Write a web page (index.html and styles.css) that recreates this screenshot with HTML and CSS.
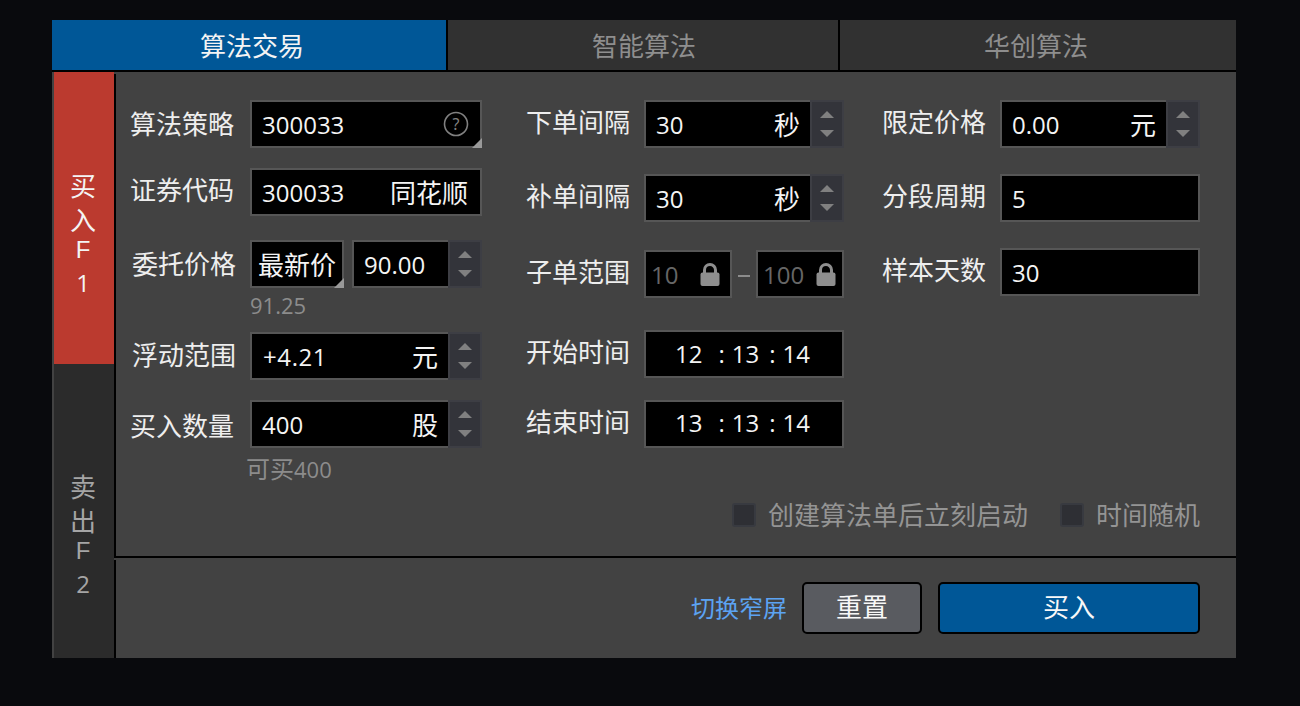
FILE: index.html
```html
<!DOCTYPE html>
<html lang="zh-CN">
<head>
    <meta charset="UTF-8">
    <meta name="viewport" content="width=device-width, initial-scale=1.0">
    <title>算法交易</title>
    <link rel="stylesheet" href="styles.css">
</head>
<body>
    <div class="panel">
        <div class="tabs">
            <div class="tab active">算法交易</div>
            <div class="tab middle">智能算法</div>
            <div class="tab last">华创算法</div>
        </div>
        <div class="content">
            <div class="side">
                <div class="side-btn buy">
                    <span class="ch">买</span><span class="ch">入</span><span class="key">F</span><span class="ch num">1</span>
                </div>
                <div class="side-btn sell">
                    <span class="ch">卖</span><span class="ch">出</span><span class="key">F</span><span class="ch num">2</span>
                </div>
            </div>
            <div class="main">
                <div class="form">
                    <div class="cols">
                        <div class="col col-1">
                            <div class="row">
                                <div class="label">算法策略</div>
                                <div class="field grow corner">
                                    <span class="num">300033</span>
                                    <svg class="help" width="26" height="26" viewBox="0 0 26 26">
                                        <circle cx="13" cy="13" r="11.5" fill="none" stroke="#808080" stroke-width="1.6"/>
                                        <text x="13" y="18.5" text-anchor="middle" font-size="16" fill="#808080">?</text>
                                    </svg>
                                </div>
                            </div>
                            <div class="row mt20">
                                <div class="label up">证券代码</div>
                                <div class="field grow">
                                    <span class="num">300033</span>
                                    <span class="unit name">同花顺</span>
                                </div>
                            </div>
                            <div class="row mt24">
                                <div class="label in2">委托价格</div>
                                <div class="field select corner">最新价</div>
                                <div class="field price stepped">
                                    <span class="num">90.00</span>
                                </div>
                                <div class="stepper"><i class="arrow-up"></i><i class="arrow-down"></i></div>
                            </div>
                            <div class="hint hint-price">91.25</div>
                            <div class="row">
                                <div class="label in2 up-small">浮动范围</div>
                                <div class="field grow stepped">
                                    <span class="num spaced">+4.21</span>
                                    <span class="unit">元</span>
                                </div>
                                <div class="stepper"><i class="arrow-up"></i><i class="arrow-down"></i></div>
                            </div>
                            <div class="row mt20">
                                <div class="label down">买入数量</div>
                                <div class="field grow stepped">
                                    <span class="num">400</span>
                                    <span class="unit">股</span>
                                </div>
                                <div class="stepper"><i class="arrow-up"></i><i class="arrow-down"></i></div>
                            </div>
                            <div class="hint hint-qty">可买<span class="hint-num">400</span></div>
                        </div>

                        <div class="col col-2">
                            <div class="row">
                                <div class="label up">下单间隔</div>
                                <div class="field grow stepped">
                                    <span class="num">30</span>
                                    <span class="unit">秒</span>
                                </div>
                                <div class="stepper"><i class="arrow-up"></i><i class="arrow-down"></i></div>
                            </div>
                            <div class="row mt26">
                                <div class="label up">补单间隔</div>
                                <div class="field grow stepped">
                                    <span class="num">30</span>
                                    <span class="unit">秒</span>
                                </div>
                                <div class="stepper"><i class="arrow-up"></i><i class="arrow-down"></i></div>
                            </div>
                            <div class="row mt28">
                                <div class="label up">子单范围</div>
                                <div class="field locked lock-min">
                                    <span class="num">10</span>
                                    <svg class="lock" width="20" height="23" viewBox="0 0 20 23">
                                        <path d="M4.5 11V7a5.5 5.5 0 0 1 11 0V11" fill="none" stroke="#8e8e8e" stroke-width="3"/>
                                        <rect x="0.5" y="9.5" width="19" height="13.5" rx="2" fill="#8e8e8e"/>
                                    </svg>
                                </div>
                                <span class="dash"></span>
                                <div class="field locked">
                                    <span class="num">100</span>
                                    <svg class="lock" width="20" height="23" viewBox="0 0 20 23">
                                        <path d="M4.5 11V7a5.5 5.5 0 0 1 11 0V11" fill="none" stroke="#8e8e8e" stroke-width="3"/>
                                        <rect x="0.5" y="9.5" width="19" height="13.5" rx="2" fill="#8e8e8e"/>
                                    </svg>
                                </div>
                            </div>
                            <div class="row mt32">
                                <div class="label up">开始时间</div>
                                <div class="field grow time">
                                    <span class="num">12</span><span class="sep">:</span><span class="num">13</span><span class="sep2">:</span><span class="num">14</span>
                                </div>
                            </div>
                            <div class="row mt22">
                                <div class="label up">结束时间</div>
                                <div class="field grow time time-end">
                                    <span class="num">13</span><span class="sep">:</span><span class="num">13</span><span class="sep2">:</span><span class="num">14</span>
                                </div>
                            </div>
                        </div>

                        <div class="col col-3">
                            <div class="row">
                                <div class="label up">限定价格</div>
                                <div class="field grow stepped">
                                    <span class="num">0.00</span>
                                    <span class="unit">元</span>
                                </div>
                                <div class="stepper"><i class="arrow-up"></i><i class="arrow-down"></i></div>
                            </div>
                            <div class="row mt26">
                                <div class="label up">分段周期</div>
                                <div class="field grow"><span class="num">5</span></div>
                            </div>
                            <div class="row mt26">
                                <div class="label up">样本天数</div>
                                <div class="field grow"><span class="num">30</span></div>
                            </div>
                        </div>
                    </div>

                    <div class="options">
                        <div class="check"><i class="box"></i>创建算法单后立刻启动</div>
                        <div class="check"><i class="box"></i>时间随机</div>
                    </div>
                </div>
                <div class="footer">
                    <div class="footer-inner">
                        <a class="switch">切换窄屏</a>
                        <button class="btn btn-reset">重置</button>
                        <button class="btn btn-buy">买入</button>
                    </div>
                </div>
            </div>
        </div>
    </div>
</body>
</html>
```

FILE: styles.css
```css
body {
    margin: 0;
    background-color: #090a0d;
    color: #eeeeee;
    font-family: "Noto Sans", "Noto Sans CJK SC", sans-serif;
    font-size: 26px;
    height: 706px;
    overflow: hidden;
}
.panel {
    width: 1184px;
    height: 638px;
    margin: 20px 0 0 52px;
    display: flex;
    flex-direction: column;
    background-color: #000;
}

/* tabs */
.tabs {
    display: flex;
    gap: 2px;
    height: 50px;
    margin-bottom: 2px;
}
.tab {
    display: flex;
    align-items: center;
    justify-content: center;
    box-sizing: border-box;
    background-color: #313131;
    color: #8e8e8e;
}
.tab.active {
    width: 394px;
    padding-left: 6px;
    background-color: #005797;
    color: #f4f4f4;
}
.tab.middle {
    width: 390px;
    padding-left: 2px;
}
.tab.last {
    flex: 1;
    padding-right: 4px;
}
.content {
    flex: 1;
    display: flex;
    min-height: 0;
}

/* buy / sell */
.side {
    width: 62px;
    display: flex;
    flex-direction: column;
    background-color: #424242;
    padding-left: 2px;
    box-sizing: border-box;
}
.side-btn {
    display: flex;
    flex-direction: column;
    align-items: center;
    box-sizing: border-box;
    padding-right: 2px;
}
.side-btn.buy {
    height: 292px;
    padding-top: 98px;
    background-color: #bb3a2f;
    color: #f4f4f4;
}
.side-btn.sell {
    flex: 1;
    padding-top: 107px;
    background-color: #2b2b2b;
    color: #a5a5a5;
}
.ch {
    height: 34px;
    line-height: 34px;
    font-family: "Liberation Sans", "Noto Sans CJK SC", sans-serif;
}
.ch.num {
    font-size: 24px;
    margin-top: 4px;
}
.key {
    height: 24px;
    line-height: 24px;
    font-size: 24px;
    font-family: "Liberation Sans", sans-serif;
}

/* form */
.main {
    flex: 1;
    display: flex;
    flex-direction: column;
    padding-top: 2px;
    background-color: #424242;
}
.form {
    flex: 1;
    display: flex;
    flex-direction: column;
    padding: 26px 36px 29px 14px;
    border-left: 2px solid #000;
    border-bottom: 2px solid #000;
}
.cols {
    display: flex;
}
.col-1 {
    width: 352px;
    margin-right: 44px;
}
.col-2 {
    width: 318px;
    margin-right: 38px;
}
.col-3 {
    width: 318px;
}
.row {
    display: flex;
    align-items: center;
    height: 48px;
}
.mt20 { margin-top: 20px; }
.mt22 { margin-top: 22px; }
.mt24 { margin-top: 24px; }
.mt26 { margin-top: 26px; }
.mt28 { margin-top: 28px; }
.mt32 { margin-top: 32px; }
.label {
    width: 120px;
    flex: none;
    line-height: 34px;
    white-space: nowrap;
    box-sizing: border-box;
}
.col-2 .label, .col-3 .label {
    width: 118px;
}
.label.up { padding-bottom: 4px; }
.label.up-small { padding-bottom: 2px; }
.label.down { padding-top: 4px; }
.label.in2 { padding-left: 2px; }

.field {
    position: relative;
    height: 48px;
    box-sizing: border-box;
    display: flex;
    align-items: center;
    justify-content: space-between;
    padding: 0 10px;
    background-color: #000;
    border: 2px solid #565656;
    color: #f4f4f4;
    white-space: nowrap;
}
.field.stepped {
    border-right: none;
}
.grow {
    flex: 1;
}
.num {
    font-family: "Open Sans", sans-serif;
    font-size: 24px;
}
.spaced {
    letter-spacing: 0.6px;
    margin-left: 1px;
}
.name {
    margin-right: 2px;
}
.corner::after {
    content: "";
    position: absolute;
    right: -2px;
    bottom: -2px;
    border-style: solid;
    border-width: 0 0 10px 10px;
    border-color: transparent transparent #999999 transparent;
}
.help {
    margin-right: 1px;
}
.select {
    width: 94px;
    padding: 0 6px;
    margin-right: 8px;
}
.price {
    width: 96px;
    padding: 0 10px;
}
.stepper {
    width: 34px;
    height: 48px;
    flex: none;
    box-sizing: border-box;
    display: flex;
    flex-direction: column;
    align-items: center;
    justify-content: center;
    gap: 12px;
    background-color: #33343a;
    border: 2px solid #3d3e44;
}
.arrow-up, .arrow-down {
    width: 0;
    height: 0;
    border-left: 7px solid transparent;
    border-right: 7px solid transparent;
}
.arrow-up {
    border-bottom: 7px solid #808080;
}
.arrow-down {
    border-top: 7px solid #808080;
}
.locked {
    width: 88px;
    padding: 0 6px 0 5px;
    color: #666666;
}
.lock-min {
    padding-right: 10px;
}
.dash {
    width: 12px;
    height: 2px;
    margin: 4px 6px 0;
    background-color: #8c8c8c;
}
.time {
    justify-content: flex-start;
    padding-left: 29px;
    padding-bottom: 1px;
}
.time-end {
    padding-bottom: 4px;
}
.sep {
    font-family: "Open Sans", sans-serif;
    font-size: 24px;
    margin: 0 7px 0 16px;
}
.sep2 {
    font-family: "Open Sans", sans-serif;
    font-size: 24px;
    margin: 0 7px 0 10px;
}
.hint {
    color: #8c8c8c;
    line-height: 30px;
}
.hint-price {
    font-family: "Open Sans", sans-serif;
    font-size: 22px;
    margin: 2px 0 12px 120px;
}
.hint-qty {
    font-size: 24px;
    margin: 6px 0 0 116px;
}
.hint-num {
    font-family: "Open Sans", sans-serif;
    font-size: 22px;
}

/* checkboxes */
.options {
    margin-top: auto;
    height: 24px;
    display: flex;
    justify-content: flex-end;
    gap: 32px;
    color: #949494;
}
.check {
    display: flex;
    align-items: center;
    line-height: 24px;
}
.box {
    flex: none;
    width: 24px;
    height: 24px;
    box-sizing: border-box;
    margin-right: 12px;
    background-color: #2e2f34;
    border: 2px solid #383a40;
    border-radius: 3px;
}

/* footer */
.footer {
    height: 100px;
    padding-top: 2px;
    box-sizing: border-box;
}
.footer-inner {
    height: 98px;
    box-sizing: border-box;
    border-left: 2px solid #000;
    display: flex;
    align-items: flex-start;
    justify-content: flex-end;
    padding: 22px 36px 0 0;
}
.switch {
    color: #5ca3f2;
    font-size: 24px;
    line-height: 52px;
    margin-right: 15px;
}
.btn {
    height: 52px;
    box-sizing: border-box;
    border: 2px solid #000;
    border-radius: 5px;
    color: #f8f8f8;
    font-family: inherit;
    font-size: 26px;
    padding: 0 0 4px;
}
.btn-reset {
    width: 120px;
    margin-right: 16px;
    background-color: #595b60;
}
.btn-buy {
    width: 262px;
    background-color: #005797;
}
```
